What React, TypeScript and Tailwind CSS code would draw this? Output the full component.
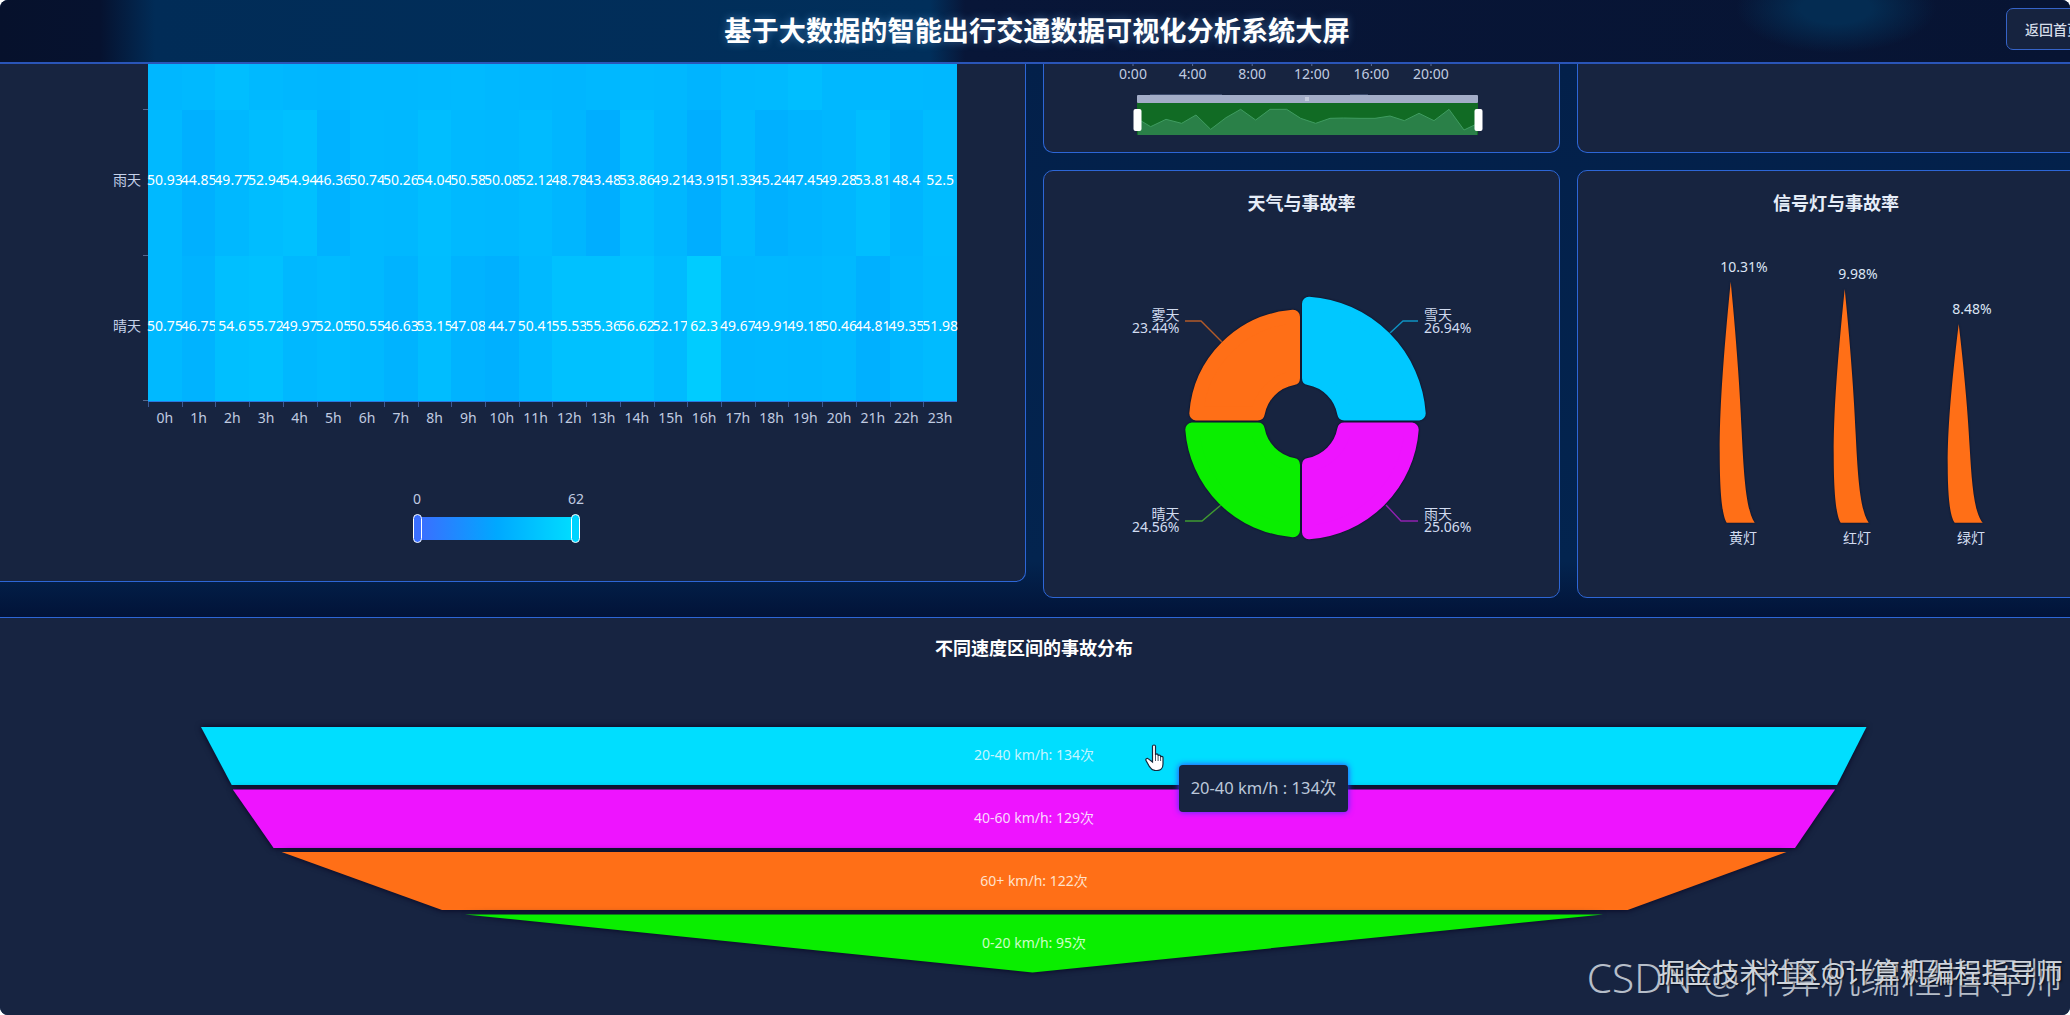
const hours = Array.from({ length: 24 }, (_, i) => `${i}h`);

const heatRows: { label: string; values: number[]; showValues: boolean }[] = [
  {
    label: "雪天",
    showValues: false,
    values: [49.2, 50.4, 53.6, 50.8, 49.6, 48.9, 49.9, 50.2, 50.6, 51.2, 50.1, 49.4, 48.6, 49.7, 50.9, 50.3, 47.4, 50.8, 51.4, 53.9, 50.2, 49.8, 50.6, 50.1],
  },
  {
    label: "雨天",
    showValues: true,
    values: [50.93, 44.85, 49.77, 52.94, 54.94, 46.36, 50.74, 50.26, 54.04, 50.58, 50.08, 52.12, 48.78, 43.48, 53.86, 49.21, 43.91, 51.33, 45.24, 47.45, 49.28, 53.81, 48.4, 52.5],
  },
  {
    label: "晴天",
    showValues: true,
    values: [50.75, 46.75, 54.6, 55.72, 49.97, 52.05, 50.55, 46.63, 53.15, 47.08, 44.7, 50.41, 55.53, 55.36, 56.62, 52.17, 62.3, 49.67, 49.91, 49.18, 50.46, 44.81, 49.35, 51.98],
  },
];

const heatColor = (v: number) => `rgb(0, ${Math.round(184 + (v - 50) * 1.6)}, 255)`;

const spark: [number, number][] = [
  [145, 208], [182, 230], [228, 208], [275, 220], [318, 195], [362, 238], [408, 203], [452, 178],
  [497, 210], [540, 178], [590, 178], [632, 205], [677, 220], [720, 205], [760, 204], [810, 205],
  [855, 205], [900, 198], [943, 212], [987, 190], [1032, 212], [1077, 178], [1122, 240], [1160, 222],
];
const sparkPts = spark.map(([x, y]) => `${1090 + x / 3},${50 + y / 3}`).join(" ");

// rounded corners come from the thick round-joined stroke
function sector(cx: number, cy: number, sx: number, sy: number, R: number, r: number) {
  const round = 7;
  const d = 8;
  const ro = R - round;
  const ri = r + round;
  const far = (v: number) => Math.sqrt(v * v - d * d);
  const sweep = sx * sy < 0 ? 1 : 0;
  const back = sweep ? 0 : 1;
  return [
    `M${cx + sx * d} ${cy + sy * far(ri)}`,
    `L${cx + sx * d} ${cy + sy * far(ro)}`,
    `A${ro} ${ro} 0 0 ${sweep} ${cx + sx * far(ro)} ${cy + sy * d}`,
    `L${cx + sx * far(ri)} ${cy + sy * d}`,
    `A${ri} ${ri} 0 0 ${back} ${cx + sx * d} ${cy + sy * far(ri)}`,
    "Z",
  ].join(" ");
}

const pie = [
  { color: "#00c8ff", sx: 1, sy: -1, R: 125, line: "#0f92c2", pts: "1390,333 1403,321 1418,321", name: "雪天", pct: "26.94%", x: 1424, y: 314, anchor: "start" as const },
  { color: "#ee14ff", sx: 1, sy: 1, R: 118, line: "#9020b0", pts: "1386,505 1401,521 1418,521", name: "雨天", pct: "25.06%", x: 1424, y: 513, anchor: "start" as const },
  { color: "#0aee00", sx: -1, sy: 1, R: 116, line: "#3f9a30", pts: "1221,505 1202,521 1185,521", name: "晴天", pct: "24.56%", x: 1179.5, y: 513, anchor: "end" as const },
  { color: "#ff6f17", sx: -1, sy: -1, R: 112, line: "#b35a28", pts: "1222,342 1201,321 1185,321", name: "雾天", pct: "23.44%", x: 1179.5, y: 314, anchor: "end" as const },
];

const signals = [
  { name: "黄灯", pct: "10.31%", tip: 1730.7, top: 281.7, cx: 1744 },
  { name: "红灯", pct: "9.98%", tip: 1844.7, top: 289, cx: 1858 },
  { name: "绿灯", pct: "8.48%", tip: 1958.7, top: 324, cx: 1972 },
];
const BASE = 522.7;

function spike(x: number, top: number) {
  const h = BASE - top;
  const y = (v: number) => top + (v / 241) * h;
  return `M${x} ${top} C${x - 8} ${y(80)} ${x - 11} ${y(130)} ${x - 11} ${y(170)} C${x - 11} ${y(215)} ${x - 8} ${y(235)} ${x - 4} ${BASE} L${x + 24} ${BASE} C${x + 15} ${y(228)} ${x + 13} ${y(190)} ${x + 11} ${y(150)} C${x + 9} ${y(100)} ${x + 4} ${y(40)} ${x} ${top} Z`;
}

const funnel = [
  { color: "#00deff", pts: "201,727 1866.5,727 1837,785 231.7,785", label: "20-40 km/h: 134次", y: 754, fill: "#c4f5ff" },
  { color: "#ee14ff", pts: "232.8,789.5 1835,789.5 1795,848 273.6,848", label: "40-60 km/h: 129次", y: 817, fill: "#fbd8ff" },
  { color: "#ff6f17", pts: "281.6,852 1786.5,852 1627.7,910 442,910", label: "60+ km/h: 122次", y: 880, fill: "#ffe2cc" },
  { color: "#0aee00", pts: "465,914.5 1603,914.5 1032.5,972.5", label: "0-20 km/h: 95次", y: 942, fill: "#ccffc8" },
];

function CardTitle({ children }: { children: string }) {
  return (
    <h3 className="flex h-[64px] items-center justify-center text-[18px] font-bold text-[#e6edf8]">
      {children}
    </h3>
  );
}

function Heatmap() {
  return (
    <div className="relative -ml-[20px] h-[518px] w-[1046px] shrink-0 rounded-br-[10px] border-r border-b border-[#2d66d6] bg-[#172440]">
      {heatRows.map((row, idx) => (
        <div key={row.label} className={`flex ${idx === 0 ? "h-[46px]" : idx === 1 ? "h-[146px]" : "h-[145px]"}`}>
          <div className="relative flex w-[168px] shrink-0 items-center justify-end pr-[7px] pb-[7px] text-[14px] text-[#c6d2ea]">
            {row.showValues && row.label}
            <span className="absolute right-0 bottom-0 h-px w-[5px] bg-[#55678e]" />
          </div>
          <div className="grid w-[809px] grid-cols-24">
            {row.values.map((v, i) => (
              <div
                key={i}
                className="flex items-center justify-center pb-[7px] text-[14px] whitespace-nowrap text-white"
                style={{ backgroundColor: heatColor(v) }}
              >
                {row.showValues && v}
              </div>
            ))}
          </div>
        </div>
      ))}
      <div className="ml-[168px] w-[809px] border-t border-[#2a78e0]">
        <div className="grid grid-cols-24">
          {hours.map((h) => (
            <div key={h} className="h-[5px] border-l border-[#3c5a94]" />
          ))}
        </div>
        <div className="grid grid-cols-24 pt-px text-center text-[14px] leading-[19px] text-[#c0cbe0]">
          {hours.map((h) => (
            <span key={h}>{h}</span>
          ))}
        </div>
      </div>
      {/* visual map */}
      <div className="mt-[62px] ml-[433px] w-[168px]">
        <div className="-ml-[1px] flex w-[172px] justify-between text-[14px] leading-[20px] text-[#c0cbe0]">
          <span className="w-[10px] text-center">0</span>
          <span className="w-[16px] text-center">62</span>
        </div>
        <div className="mt-[5px] flex h-[29px] w-[168px] items-center">
          <span className="z-10 h-[29px] w-[9px] shrink-0 rounded-full border border-white bg-[#3a6fff]" />
          <span className="-mx-[1px] h-[23px] w-[151px] bg-[linear-gradient(90deg,#3a6fff_0%,#00a8ff_50%,#00dcff_100%)]" />
          <span className="z-10 h-[29px] w-[9px] shrink-0 rounded-full border border-white bg-[#00d4ff]" />
        </div>
      </div>
    </div>
  );
}

function TimeSlider() {
  const ticks = ["0:00", "4:00", "8:00", "12:00", "16:00", "20:00"];
  return (
    <svg viewBox="1044 64 515 88" className="block h-[88px] w-[515px]">
      {ticks.map((t, i) => (
        <g key={t}>
          <line x1={1133 + i * 59.6} x2={1133 + i * 59.6} y1={64} y2={66} stroke="#5e6f96" />
          <text x={1133 + i * 59.6} y={73} textAnchor="middle" dominantBaseline="central" fontSize={14} fill="#c0cbe0">
            {t}
          </text>
        </g>
      ))}
      <path d="M1150 95 L1222 95 M1350 95 L1368 95" stroke="#5e6f96" strokeWidth={1} />
      <rect x={1137} y={95} width={341} height={8} rx={1} fill="#a3adc8" />
      <rect x={1305.5} y={97} width={1} height={4} fill="#e6eaf4" />
      <rect x={1307.5} y={97} width={1} height={4} fill="#e6eaf4" />
      <rect x={1137} y={103} width={341} height={32} fill="#116b24" />
      <polygon points={`1138,135 ${sparkPts} 1477,135`} fill="#2a8048" />
      <polyline points={sparkPts} fill="none" stroke="#3f9c60" strokeWidth={1} />
      <rect x={1133.5} y={109} width={8} height={22} rx={2} fill="#ffffff" />
      <rect x={1474.5} y={109} width={8} height={22} rx={2} fill="#ffffff" />
    </svg>
  );
}

function WeatherPie() {
  return (
    <svg viewBox="1044 235 515 362" className="block h-[362px] w-[515px]">
      {pie.map((p) => (
        <g key={p.name}>
          <polyline points={p.pts} fill="none" stroke={p.line} strokeWidth={1.4} />
          <path
            d={sector(1301, 421.5, p.sx, p.sy, p.R, 37)}
            fill={p.color}
            stroke={p.color}
            strokeWidth={14}
            strokeLinejoin="round"
            className="drop-shadow-[0_0_1px_rgba(0,0,20,0.7)]"
          />
          <g fontSize={14} fill="#d2dcf0" textAnchor={p.anchor} dominantBaseline="central">
            <text x={p.x} y={p.y}>{p.name}</text>
            <text x={p.x} y={p.y + 13.5}>{p.pct}</text>
          </g>
        </g>
      ))}
    </svg>
  );
}

function SignalChart() {
  return (
    <svg viewBox="1578 235 492 362" className="block h-[362px] w-[492px]">
      {signals.map((s) => (
        <g key={s.name}>
          <path d={spike(s.tip, s.top)} fill="#ff6f17" className="drop-shadow-[0_0_1px_rgba(0,0,20,0.6)]" />
          <text x={s.cx} y={s.top - 15.5} textAnchor="middle" dominantBaseline="central" fontSize={14} fill="#dce4f4">
            {s.pct}
          </text>
          <text x={s.cx - 1} y={537} textAnchor="middle" dominantBaseline="central" fontSize={14} fill="#d2dcf0">
            {s.name}
          </text>
        </g>
      ))}
    </svg>
  );
}

function HandCursor() {
  return (
    <svg viewBox="0 0 21 27" className="absolute top-[126px] left-[1145px] h-[27px] w-[21px]">
      <path
        d="M7.5 2.2c0-1.6 3-1.6 3 0V11c0-1.4 2.6-1.4 2.6 0v1c0-1.3 2.5-1.3 2.5.2v1c.2-1.3 2.4-1.2 2.4.4V20c0 4-2.5 6.5-6 6.5h-1.5c-3 0-4.5-1.5-6-3.8L1 16.5c-.8-1.4 1-2.8 2.4-1.6L7.5 18Z"
        fill="#ffffff"
        stroke="#16283c"
        strokeWidth={1.2}
      />
      <path d="M10.5 11v6M13.1 12v5M15.6 13v4" stroke="#16283c" strokeWidth={0.8} fill="none" />
    </svg>
  );
}

export default function App() {
  return (
    <div className="relative flex h-[1015px] w-[2070px] flex-col overflow-hidden rounded-[8px] bg-[#02204a] font-['Noto_Sans','Noto_Sans_CJK_SC',sans-serif]">
      <header className="relative flex h-[64px] shrink-0 items-center justify-center border-b-2 border-[#2a55b8] bg-[radial-gradient(ellipse_100px_45px_at_1836px_8px,#042c52_35%,transparent_100%),linear-gradient(90deg,#06112c_0px,#06122f_100px,#012c57_155px,#012f5b_930px,#081638_965px,#071433_2070px)]">
        <h1 className="pl-[4px] text-[27.2px] font-bold text-white [text-shadow:0_0_8px_rgba(120,190,255,0.45)]">
          基于大数据的智能出行交通数据可视化分析系统大屏
        </h1>
        <button className="absolute top-[8px] left-[2006px] h-[42px] w-[100px] rounded-[7px] border border-[#3563c8] bg-[#16233f] pl-[18px] text-left text-[14px] font-medium whitespace-nowrap text-[#d5dce8]">
          返回首页
        </button>
      </header>

      <div className="flex h-[553px] shrink-0 items-start gap-[17px] bg-[linear-gradient(180deg,#03204a_0%,#03244f_90%,#021338_100%)]">
        <Heatmap />
        <div className="grid shrink-0 grid-cols-[517px_518px] grid-rows-[89px_428px] gap-x-[17px] gap-y-[17px]">
          <div className="rounded-b-[10px] border-x border-b border-[#2d66d6] bg-[#172440]">
            <TimeSlider />
          </div>
          <div className="rounded-b-[10px] border-x border-b border-[#2d66d6] bg-[#172440]" />
          <div className="rounded-[10px] border border-[#2d66d6] bg-[#172440]">
            <CardTitle>天气与事故率</CardTitle>
            <WeatherPie />
          </div>
          <div className="rounded-[10px] border border-[#2d66d6] bg-[#172440]">
            <CardTitle>信号灯与事故率</CardTitle>
            <SignalChart />
          </div>
        </div>
      </div>

      <section className="relative flex-1 border-t border-[#2d66d6] bg-[#172441]">
        <h2 className="flex h-[64px] items-center justify-center pr-[2px] pb-[3px] text-[18px] font-bold text-white">
          不同速度区间的事故分布
        </h2>
        <svg viewBox="0 682 2070 333" className="block h-[333px] w-[2070px]">
          {funnel.map((f) => (
            <polygon key={f.label} points={f.pts} fill={f.color} className="drop-shadow-[0_0_3px_rgba(4,0,30,0.95)]" />
          ))}
          {funnel.map((f) => (
            <text key={f.label} x={1034} y={f.y} textAnchor="middle" dominantBaseline="central" fontSize={14} fill={f.fill}>
              {f.label}
            </text>
          ))}
        </svg>
        <HandCursor />
        <div className="absolute top-[147px] left-[1179px] flex h-[47px] w-[169px] items-center justify-center rounded-[4px] bg-[#172440] text-[16.5px] whitespace-nowrap text-[#bcc8da] shadow-[0_0_6px_#3a30ff]">
          20-40 km/h : 134次
        </div>
      </section>

      <div className="absolute right-[7px] bottom-[14px] text-[40.5px] leading-[46px] font-light whitespace-nowrap text-[#b6bec9]">
        CSDN @计算机编程指导师
      </div>
      <div className="absolute right-[7px] bottom-[27px] text-[27.2px] leading-[30px] whitespace-nowrap text-[#d0d5dc] [text-shadow:1px_1px_2px_rgba(0,0,0,0.7)]">
        掘金技术社区@计算机编程指导师
      </div>
    </div>
  );
}
